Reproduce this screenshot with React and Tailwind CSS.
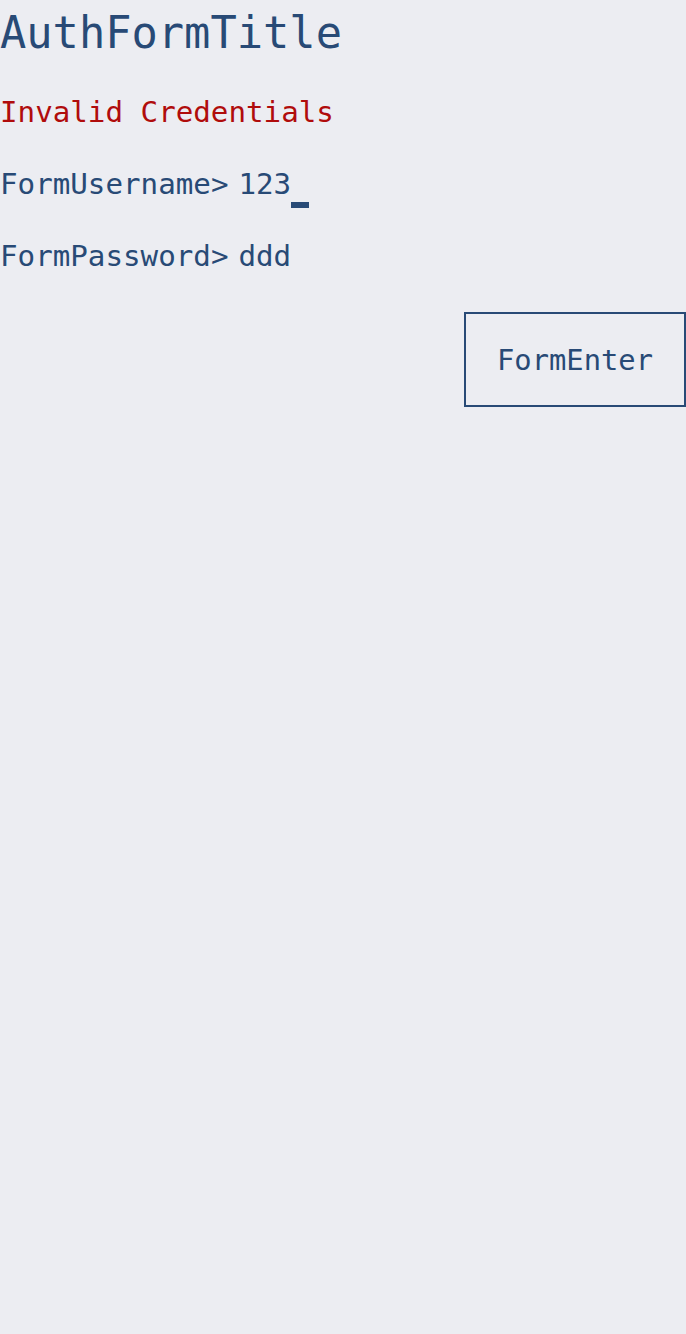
import React, { useState } from "react";

const mono = { fontFamily: '"DejaVu Sans Mono", "Liberation Mono", monospace' };

function PromptLine({ label, value, active }) {
    return (
        <div className="mt-[32px] h-[40px] flex items-start text-[29.2px] leading-[40px] text-[#284a76] whitespace-pre">
            <span>{label}&gt;</span>
            <span className="ml-[10px]">{value}</span>
            {active && (
                <span className="inline-block self-start mt-[38px] w-[18px] h-[6px] bg-[#284a76]" />
            )}
        </div>
    );
}

export default function App() {
    const [username] = useState("123");
    const [password] = useState("ddd");

    return (
        <div className="min-h-screen bg-[#ecedf2] overflow-hidden" style={mono}>
            <h1 className="pt-[5px] h-[61px] text-[43.7px] leading-[56px] text-[#284a76]">AuthFormTitle</h1>

            <div className="mt-[31px] h-[40px] text-[29.2px] leading-[40px] text-[#b00c0c]">Invalid Credentials</div>

            <PromptLine label="FormUsername" value={username} active />
            <PromptLine label="FormPassword" value={password} />

            <div className="mt-[36px] flex justify-end">
                <button className="w-[222px] h-[95px] border-2 border-[#284a76] flex items-center justify-center text-[28.8px] leading-[40px] text-[#284a76]">
                    FormEnter
                </button>
            </div>
        </div>
    );
}
